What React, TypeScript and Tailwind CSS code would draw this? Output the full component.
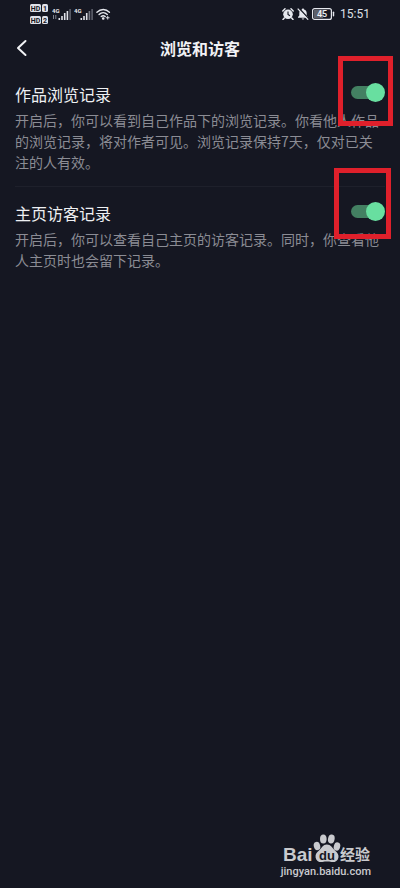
import { useId, useState } from "react";

function SignalBars({ data }: { data?: boolean }) {
  return (
    <svg viewBox="0 0 20 14" className="h-3.5 w-5" aria-hidden="true">
      <text x="0" y="6" fontSize="6" fontWeight="700" fill="#e6e8ee" className="font-['Roboto',sans-serif]">4G</text>
      {data && <path d="M1.5 8v4M3.8 8v4" stroke="#80838e" strokeWidth="1" />}
      <g fill="#dfe1e8">
        <rect x="6.500" y="11" width="1.600" height="2" />
        <rect x="9.200" y="9" width="1.600" height="4" />
        <rect x="11.900" y="6" width="1.600" height="7" />
        <rect x="14.600" y="4" width="1.600" height="9" fill={data ? "#dfe1e8" : "#777a85"} />
        <rect x="17.300" y="2" width="1.600" height="11" fill="#5d606b" />
      </g>
    </svg>
  );
}

function HdBadge({ slot }: { slot: string }) {
  return (
    <svg viewBox="0 0 18 8" className="h-2 w-[18px]" aria-hidden="true">
      <rect width="11" height="8" rx="1.500" fill="#dfe1e8" />
      <rect x="12" width="6" height="8" rx="1.500" fill="#dfe1e8" />
      <g fill="#151722" fontSize="7" fontWeight="700" textAnchor="middle" className="font-['Roboto',sans-serif]">
        <text x="5.500" y="6.500">HD</text>
        <text x="15" y="6.500">{slot}</text>
      </g>
    </svg>
  );
}

function StatusBar() {
  return (
    <div className="flex h-7 items-center justify-between px-[30px]">
      <div className="flex items-center gap-0.5">
        <div className="mr-0.5 flex flex-col gap-1">
          <HdBadge slot="1" />
          <HdBadge slot="2" />
        </div>
        <SignalBars data />
        <SignalBars />
        <svg viewBox="0 0 16 14" className="h-3.5 w-[15px]" fill="none" stroke="#e6e8ee" strokeWidth="1.500" strokeLinecap="round" aria-hidden="true">
          <path d="M1 5.200C5 1.300 10.500 1.300 14.300 5.200M3.300 7.500c2.500-2.400 6.200-2.400 8.700 0M5.600 9.700c1.300-1.100 2.900-1.100 4.200 0" />
          <circle cx="7.700" cy="11.800" r=".7" fill="#e6e8ee" />
          <path d="M11 11h3M12.500 9.500v3" strokeWidth="1" />
        </svg>
      </div>
      <div className="flex items-center gap-[3px]">
        <svg viewBox="0 0 12 12" className="size-3" aria-hidden="true">
          <circle cx="6" cy="6.300" r="4.800" fill="#e6e8ee" />
          <path d="M.8 3 3 .8M11.200 3 9 .8M2.300 10 1 11.500M9.700 10l1.300 1.500" stroke="#e6e8ee" strokeWidth="1.500" strokeLinecap="round" />
          <path d="M6 3.500v3l2 1.300" fill="none" stroke="#151722" strokeWidth="1.100" />
        </svg>
        <svg viewBox="0 0 12 12" className="size-3" aria-hidden="true">
          <path d="M6 .5c.7 0 1 .4 1 1C9 2 9.700 3.500 9.700 5.200v2.300L11 9v.7H1V9l1.300-1.500V5.200C2.300 3.500 3 2 5 1.500c0-.6.3-1 1-1ZM4.700 10.400h2.600c-.2 1.300-2.400 1.300-2.600 0Z" fill="#e6e8ee" />
          <path d="m1.800 0 10 11" stroke="#151722" strokeWidth="1.500" />
          <path d="m.7.7 10.500 11" stroke="#e6e8ee" strokeWidth="1.200" />
        </svg>
        <svg viewBox="0 0 23 12" className="h-3 w-[23px]" aria-hidden="true">
          <rect x=".6" y=".6" width="18.800" height="10.800" rx="2" fill="none" stroke="#e6e8ee" strokeWidth="1.200" />
          <rect x="2" y="2" width="9" height="8" fill="#5d606b" />
          <rect x="20.800" y="3.500" width="1.400" height="5" rx=".7" fill="#e6e8ee" />
          <text x="10" y="9.300" fontSize="9" fontWeight="500" fill="#f1f2f5" textAnchor="middle" className="font-['Roboto',sans-serif]">45</text>
        </svg>
        <span className="ml-0.5 font-['Roboto',sans-serif] text-xs leading-4 text-[#dfe1e8]">15:51</span>
      </div>
    </div>
  );
}

type SettingProps = {
  title: string;
  description: string;
  frame: string;
};

function Setting({ title, description, frame }: SettingProps) {
  const id = useId();
  const [on, setOn] = useState(true);
  return (
    <section className="relative pt-3.5 pb-[13px]">
      <div className="flex items-start justify-between">
        <label htmlFor={id} className="text-base leading-6 text-[#eef0f3]">{title}</label>
        <span className="mt-px grid h-[19px] w-[34px] items-center">
          <input
            id={id}
            type="checkbox"
            role="switch"
            checked={on}
            onChange={() => setOn(!on)}
            className="peer col-start-1 row-start-1 h-[13px] w-8 appearance-none rounded-full bg-[#4a4c57] checked:bg-[#438062]"
          />
          <span className="pointer-events-none col-start-1 row-start-1 size-[19px] rounded-full bg-[#a0a2aa] peer-checked:justify-self-end peer-checked:bg-[#68dfa0]" />
        </span>
      </div>
      <p className="mt-1 text-sm leading-[21px] text-[#8b8c94]">{description}</p>
      <div className={`pointer-events-none absolute border-5 border-[#df202b] ${frame}`} />
    </section>
  );
}

function Watermark() {
  return (
    <footer className="mt-auto flex flex-col items-end pr-[29px] pb-2.5 text-[#c9cace]">
      <svg viewBox="0 0 88 32" className="h-8 w-[88px]" fill="currentColor" role="img" aria-label="Baidu 经验">
        <text x="0" y="27" fontSize="19" fontWeight="700" className="font-['Liberation_Sans',sans-serif]">Bai</text>
        <ellipse cx="34" cy="12" rx="3.200" ry="4.200" transform="rotate(-15 34 12)" />
        <ellipse cx="40.300" cy="5" rx="3.300" ry="4.500" />
        <ellipse cx="48.300" cy="5" rx="3.300" ry="4.500" transform="rotate(10 48.300 5)" />
        <ellipse cx="54" cy="12.500" rx="3.200" ry="4.200" transform="rotate(15 54 12.500)" />
        <path d="M43.800 10.500c4.200 0 5.400 3.400 8.200 5.900 2.700 2.400 4 4.200 3.400 7.300-.7 3.600-3.900 4.800-6.900 4.300-3.100-.6-5.900-.6-9 0-3.100.6-6.400-1-6.900-4.600-.4-3.100 1-4.700 3.400-6.800 2.900-2.600 3.900-6.100 7.800-6.100Z" />
        <text x="44" y="25.500" fontSize="13" fontWeight="700" fill="#151722" textAnchor="middle" className="font-['Liberation_Sans',sans-serif]">du</text>
        <text x="57" y="26" fontSize="15" fontWeight="700" className="font-['Noto_Sans_CJK_SC',sans-serif]">经验</text>
      </svg>
      <a href="#jingyan" className="font-['Roboto',sans-serif] text-[11px] leading-3 font-medium">jingyan.baidu.com</a>
    </footer>
  );
}

export default function App() {
  return (
    <div className="flex min-h-screen flex-col bg-[#151722] font-['Noto_Sans_CJK_SC',sans-serif]">
      <StatusBar />
      <header className="grid h-10 grid-cols-[1fr_auto_1fr] items-center px-[15px]">
        <button type="button" aria-label="返回" className="justify-self-start">
          <svg viewBox="0 0 14 18" className="h-[18px] w-3.5" fill="none" stroke="#f1f2f5" strokeWidth="2" strokeLinecap="round" strokeLinejoin="round">
            <path d="M10.500 2 3 9l7.500 7" />
          </svg>
        </button>
        <h1 className="text-base leading-6 font-bold text-[#f1f2f5]">浏览和访客</h1>
      </header>
      <main className="divide-y divide-[#1e202b] px-[15px]">
        <Setting
          title="作品浏览记录"
          description="开启后，你可以看到自己作品下的浏览记录。你看他人作品的浏览记录，将对作者可见。浏览记录保持7天，仅对已关注的人有效。"
          frame="-top-3 -right-2 h-[70px] w-[55px]"
        />
        <Setting
          title="主页访客记录"
          description="开启后，你可以查看自己主页的访客记录。同时，你查看他人主页时也会留下记录。"
          frame="-top-[19px] -right-1.5 h-[71px] w-[57px]"
        />
      </main>
      <Watermark />
    </div>
  );
}
